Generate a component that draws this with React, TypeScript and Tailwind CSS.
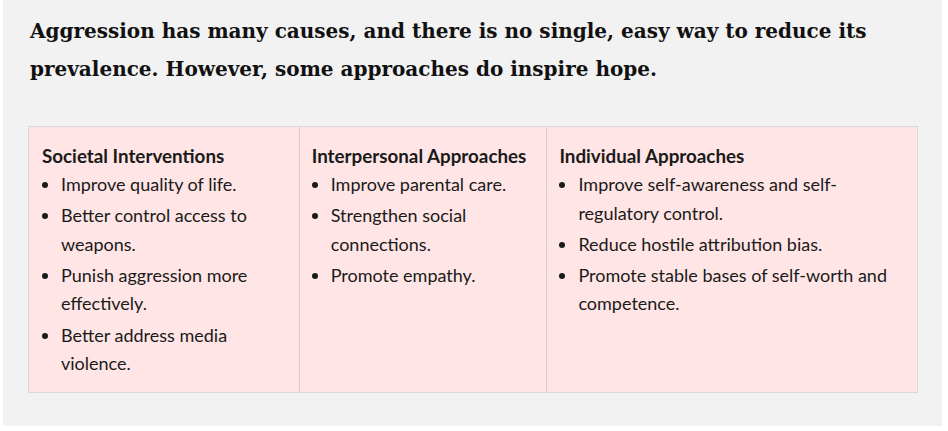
import React from "react";

const cols = [
  {
    title: "Societal Interventions",
    w: "w-[270px]",
    items: [
      "Improve quality of life.",
      "Better control access to weapons.",
      "Punish aggression more effectively.",
      "Better address media violence.",
    ],
  },
  {
    title: "Interpersonal Approaches",
    w: "w-[248px]",
    items: ["Improve parental care.", "Strengthen social connections.", "Promote empathy."],
  },
  {
    title: "Individual Approaches",
    w: "w-[371px]",
    items: [
      "Improve self-awareness and self-regulatory control.",
      "Reduce hostile attribution bias.",
      "Promote stable bases of self-worth and competence.",
    ],
  },
];

export default function App() {
  return (
    <div className="w-[948px] h-[431px] bg-white">
      <div className="ml-[3px] w-[939px] h-[426px] bg-[#f2f2f2] pt-[12px]">
        <p
          className="ml-[27px] w-[880px] text-[20px] leading-[38px] font-bold text-[#111]"
          style={{ fontFamily: '"DejaVu Serif", serif' }}
        >
          Aggression has many causes, and there is no single, easy way to reduce its prevalence. However, some
          approaches do inspire hope.
        </p>
        <div
          className="mt-[38px] ml-[25px] flex w-[890px] border border-[#d9d9d9] bg-[#ffe5e5] text-[18px] text-[#1a1a1a]"
          style={{ fontFamily: 'Lato, "Liberation Sans", sans-serif' }}
        >
          {cols.map((c, i) => (
            <div
              key={c.title}
              className={`${c.w} pr-[10px] pt-[15px] pb-[14px] ${i > 0 ? "border-l border-[#d6d0d0] pl-[12px]" : "pl-[13px]"}`}
            >
              <div className="font-bold leading-[28px] text-[18.8px]">{c.title}</div>
              <ul className="list-disc pl-[19px] leading-[28.5px]">
                {c.items.map((t) => (
                  <li key={t} className="mt-[2.7px] first:mt-0">
                    {t}
                  </li>
                ))}
              </ul>
            </div>
          ))}
        </div>
      </div>
    </div>
  );
}
